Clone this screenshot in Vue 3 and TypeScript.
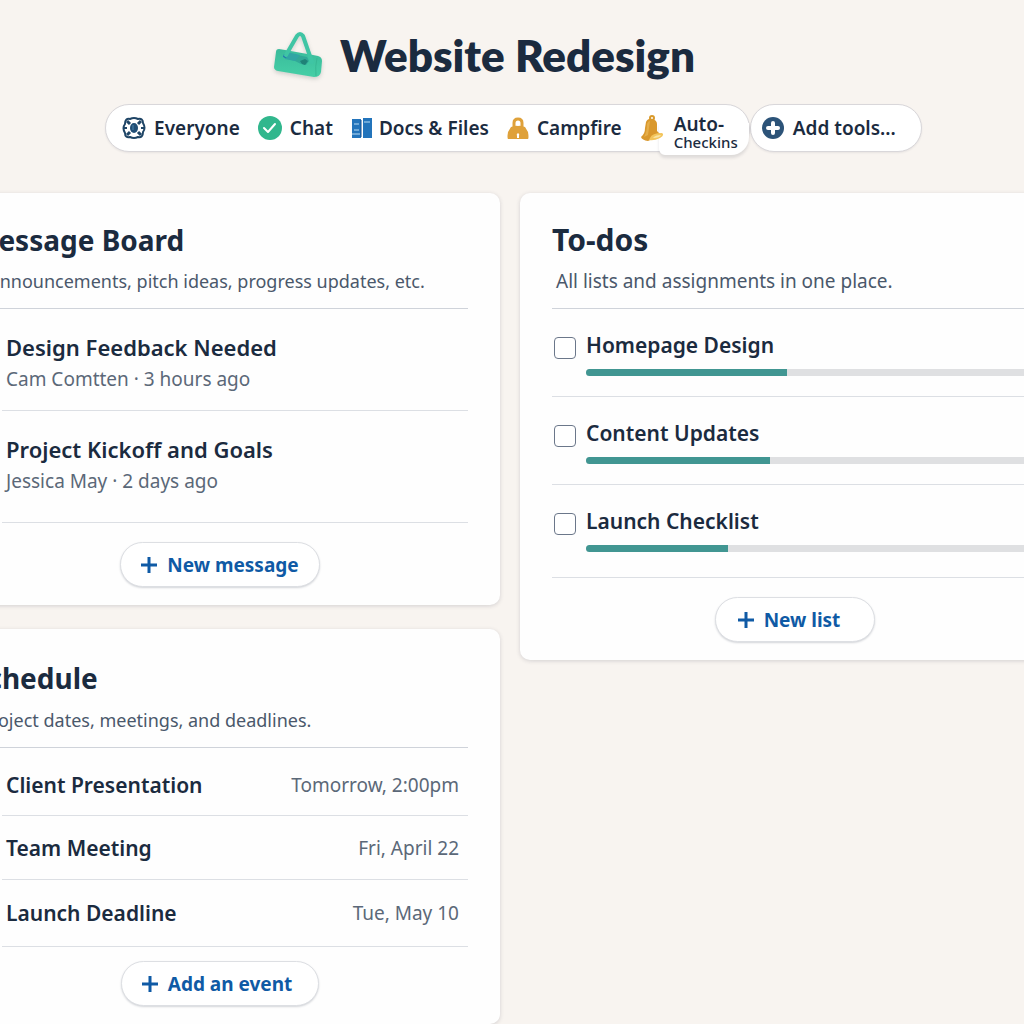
<script setup lang="ts">
interface Message {
  title: string
  author: string
  age: string
}

interface TodoList {
  id: string
  title: string
  progress: number
}

interface ScheduleEvent {
  title: string
  when: string
}

const messages: Message[] = [
  { title: 'Design Feedback Needed', author: 'Cam Comtten', age: '3 hours ago' },
  { title: 'Project Kickoff and Goals', author: 'Jessica May', age: '2 days ago' },
]

const todoLists: TodoList[] = [
  { id: 'homepage', title: 'Homepage Design', progress: 44.5 },
  { id: 'content', title: 'Content Updates', progress: 40.8 },
  { id: 'launch', title: 'Launch Checklist', progress: 31.4 },
]

const events: ScheduleEvent[] = [
  { title: 'Client Presentation', when: 'Tomorrow, 2:00pm' },
  { title: 'Team Meeting', when: 'Fri, April 22' },
  { title: 'Launch Deadline', when: 'Tue, May 10' },
]
</script>

<template>
  <div class="page">
    <header class="header">
      <svg class="logo" viewBox="0 0 50 50" aria-hidden="true">
        <defs>
          <linearGradient id="bag" x1="0" y1="0" x2="0" y2="1">
            <stop offset="0" stop-color="#3abb9b" />
            <stop offset="1" stop-color="#45cfa6" />
          </linearGradient>
        </defs>
        <path d="M3 22 Q3 19 6 19 L12 20 L40 25 L45 26 Q49 27 49 31 L48 42 Q47 47 41 47 L5 41 Q1 40 1 37 Z" fill="url(#bag)" />
        <path d="M11 25 L15 23 L34 27 L36 31 L33 35 L28 34 L22 31 L11 28 Z" fill="#31a897" />
        <path d="M14 22 L27 25 L22 31 L12 29 Z" fill="#31a5a4" />
        <path d="M11 24 L14 24 L13 28 L10 27 Z" fill="#2273b3" />
        <path d="M27 31 L32 29 L35 31 L32 35 L29 34 Z" fill="#1f8277" />
        <path d="M13 25 L24 6 Q27 2 30 6 L39 32" fill="none" stroke="#3fc5a4" stroke-width="4" stroke-linecap="round" stroke-linejoin="round" />
        <path d="M44 28 Q42 36 43 46" fill="none" stroke="#37b894" stroke-width="1" />
      </svg>
      <h1>Website Redesign</h1>
    </header>

    <nav class="toolbar" aria-label="Project tools">
      <div class="tools">
        <a href="#" class="tool">
          <svg class="icon" viewBox="0 0 24 24" aria-hidden="true">
            <path d="M8 3 Q12 1 16 3 Q21 2 21 7 Q24 12 21 16 Q21 22 16 21 Q12 23 8 21 Q3 22 3 17 Q0 12 3 8 Q3 2 8 3 Z" fill="#fff" stroke="#1f4566" stroke-width="2" stroke-linejoin="round" />
            <path d="M5 5 L8 8 M19 5 L16 8 M19 19 L16 16 M5 19 L8 16" stroke="#1f4566" stroke-width="3" />
            <path d="M2 12 H5 M19 12 H22" stroke="#1f4566" stroke-width="2" />
            <ellipse cx="12" cy="12" rx="4" ry="5" fill="#1f4d75" />
            <path d="M11 9 V14" stroke="#4f86ad" stroke-width="1" />
          </svg>
          Everyone
        </a>
        <a href="#" class="tool">
          <svg class="icon" viewBox="0 0 24 24" aria-hidden="true">
            <circle cx="12" cy="12" r="12" fill="#31b78d" />
            <path d="M6 12 L10 16 L17 8" fill="none" stroke="#fff" stroke-width="2" stroke-linecap="round" stroke-linejoin="round" />
          </svg>
          Chat
        </a>
        <a href="#" class="tool docs">
          <svg class="icon" viewBox="0 0 22 20" aria-hidden="true">
            <path d="M1 1 H10 V20 H1 Z" fill="#2374bb" />
            <path d="M12 0 H21 V20 H12 Z" fill="#2374bb" />
            <path d="M10 2 V19" stroke="#174f8c" stroke-width="1" />
            <path d="M3 6 H8 M3 12 H8 M1 16 H9 M13 4 H19" stroke="#b9dcf5" stroke-width="1" />
          </svg>
          Docs &amp; Files
        </a>
        <a href="#" class="tool campfire">
          <svg class="icon" viewBox="0 0 22 22" aria-hidden="true">
            <path d="M7 12 V6 Q7 2 11 2 Q15 2 15 6 V12" fill="none" stroke="#dfa13a" stroke-width="3" />
            <path d="M4 10 Q11 7 18 10 L21 15 Q22 21 21 22 H1 Q0 21 1 15 Z" fill="#dfa13a" />
            <circle cx="11" cy="7" r="2" fill="#fff" />
            <path d="M11 16 Q13 17 12 19 L12 21 H10 L10 19 Q9 17 11 16" fill="#fff" />
          </svg>
          Campfire
        </a>
        <a href="#" class="tool checkins">
          <svg class="icon" viewBox="0 0 24 26" aria-hidden="true">
            <circle cx="12" cy="3" r="2" fill="none" stroke="#d99a2c" stroke-width="2" />
            <path d="M6 7 Q8 3 12 4 Q17 5 17 9 L17 16 L21 20 L8 26 Q2 25 1 22 Q5 19 5 13 Z" fill="#d9982d" />
            <path d="M7 9 Q8 6 10 6 L8 20 L4 22 Q7 17 7 9" fill="#e5ae4a" />
            <path d="M10 23 Q12 18 22 18 Q25 20 20 23 Q14 26 9 25 Z" fill="#f3c55c" />
            <path d="M13 23 Q15 20 21 20 Q20 23 13 23" fill="#fae5a5" />
          </svg>
          <span class="stacked">Auto-<small>Checkins</small></span>
        </a>
      </div>
      <button type="button" class="add-tools">
        <svg class="icon" viewBox="0 0 22 22" aria-hidden="true">
          <circle cx="11" cy="11" r="11" fill="#2c5378" />
          <path d="M11 6 V16 M6 11 H16" stroke="#fff" stroke-width="4" stroke-linecap="round" />
        </svg>
        Add tools…
      </button>
    </nav>

    <main class="board">
      <div class="column">
        <section class="card messages">
          <h2>Message Board</h2>
          <p class="lead">Post announcements, pitch ideas, progress updates, etc.</p>
          <ul class="rows">
            <li v-for="message in messages" :key="message.title">
              <h3>{{ message.title }}</h3>
              <p class="meta">{{ message.author }} · {{ message.age }}</p>
            </li>
          </ul>
          <button type="button" class="action">
            <svg viewBox="0 0 16 16" aria-hidden="true"><path d="M8 0 V16 M0 8 H16" /></svg>
            New message
          </button>
        </section>

        <section class="card schedule">
          <h2>Schedule</h2>
          <p class="lead">Project dates, meetings, and deadlines.</p>
          <ul class="rows">
            <li v-for="event in events" :key="event.title">
              <h3>{{ event.title }}</h3>
              <time>{{ event.when }}</time>
            </li>
          </ul>
          <button type="button" class="action">
            <svg viewBox="0 0 16 16" aria-hidden="true"><path d="M8 0 V16 M0 8 H16" /></svg>
            Add an event
          </button>
        </section>
      </div>

      <div class="column">
        <section class="card todos">
          <h2>To-dos</h2>
          <p class="lead">All lists and assignments in one place.</p>
          <ul class="rows">
            <li v-for="list in todoLists" :key="list.id">
              <input :id="list.id" type="checkbox" />
              <div class="todo">
                <label :for="list.id">{{ list.title }}</label>
                <div class="track">
                  <div class="fill" :style="{ width: list.progress + '%' }"></div>
                </div>
              </div>
            </li>
          </ul>
          <button type="button" class="action">
            <svg viewBox="0 0 16 16" aria-hidden="true"><path d="M8 0 V16 M0 8 H16" /></svg>
            New list
          </button>
        </section>
      </div>
    </main>
  </div>
</template>

<style>
body {
  margin: 0;
  background: #f8f4f0;
}
</style>

<style scoped>
.page {
  box-sizing: border-box;
  min-height: 100vh;
  overflow: hidden;
  background: #f8f4f0;
  color: #1b2b3f;
  font-family: "Noto Sans", "Open Sans", sans-serif;
  font-size: 19px;
}

h1,
h2,
h3,
p,
ul {
  margin: 0;
  padding: 0;
}

ul {
  list-style: none;
}

.header {
  display: flex;
  justify-content: center;
  align-items: center;
  gap: 17px;
  height: 104px;
  padding: 6px 56px 0 0;
  box-sizing: border-box;
}

.header h1 {
  font-family: Lato, "Noto Sans", sans-serif;
  font-size: 44px;
  line-height: 56px;
  font-weight: 800;
}

.logo {
  width: 50px;
  height: 50px;
  filter: drop-shadow(0 2px 2px rgba(40, 60, 60, 0.2));
}

.toolbar {
  display: flex;
  justify-content: center;
  height: 48px;
  padding-left: 3px;
  font-weight: 600;
}

.tools,
.add-tools {
  display: flex;
  align-items: center;
  box-sizing: border-box;
  border: 1px solid #d9d7da;
  border-radius: 24px;
  background: #fff;
  box-shadow: 0 1px 2px rgba(40, 40, 60, 0.08);
  white-space: nowrap;
}

.tools {
  position: relative;
  gap: 18px;
  padding: 0 11px 0 16px;
}

.tool {
  display: flex;
  align-items: center;
  gap: 8px;
  color: inherit;
  text-decoration: none;
}

.icon {
  flex: none;
  width: 24px;
  height: 24px;
}

.docs {
  gap: 6px;
}

.docs .icon {
  width: 22px;
  height: 20px;
}

.campfire .icon {
  width: 22px;
  height: 22px;
}

.checkins {
  gap: 10px;
}

.checkins::before {
  content: "";
  position: absolute;
  right: 0;
  bottom: -4px;
  width: 90px;
  height: 32px;
  border-radius: 0 0 18px 6px;
  background: #fff;
  box-shadow: 0 3px 3px rgba(40, 40, 60, 0.12);
}

.checkins .icon {
  position: relative;
  height: 26px;
}

.stacked {
  position: relative;
  display: flex;
  flex-direction: column;
  padding-top: 8px;
  line-height: 20px;
}

.stacked small {
  font-size: 15px;
  line-height: 16px;
  font-weight: 500;
}

.add-tools {
  gap: 9px;
  padding: 0 25px 0 11px;
  color: inherit;
  font: inherit;
}

.add-tools .icon {
  width: 22px;
  height: 22px;
}

.board {
  display: grid;
  grid-template-columns: 56fr 55fr;
  align-items: start;
  gap: 20px;
  margin: 41px -46px 0 -60px;
}

.column {
  display: flex;
  flex-direction: column;
  gap: 24px;
}

.card {
  display: flex;
  flex-direction: column;
  padding: 27px 32px 18px;
  border-radius: 10px;
  background: #fefefe;
  box-shadow: 0 1px 4px rgba(50, 50, 70, 0.18);
}

h2 {
  font-size: 28px;
  line-height: 40px;
  font-weight: 700;
}

.todos h2 {
  font-size: 30px;
}

.lead {
  padding: 7px 0 13px;
  border-bottom: 1px solid #cfd3da;
  color: #4a586b;
  font-size: 18px;
  line-height: 28px;
  white-space: nowrap;
}

.messages .lead {
  text-indent: -24px;
}

.rows {
  margin-left: 30px;
}

.rows li {
  box-sizing: border-box;
  border-bottom: 1px solid #dcdfe4;
  padding-left: 4px;
}

h3,
label {
  font-size: 21px;
  line-height: 30px;
  font-weight: 600;
}

.meta,
time {
  color: #5b6878;
  line-height: 28px;
}

.messages h3 {
  font-size: 22px;
}

.messages li {
  min-height: 102px;
  padding-top: 23px;
}

.messages li:last-child {
  min-height: 112px;
}

.meta {
  padding-top: 3px;
}

.schedule h2 {
  padding-top: 2px;
}

.schedule .lead {
  padding: 8px 0 13px 8px;
}

.schedule li {
  display: flex;
  justify-content: space-between;
  align-items: center;
  min-height: 64px;
  padding-right: 9px;
}

.schedule li:first-child {
  min-height: 68px;
  padding-top: 6px;
}

.schedule li:last-child {
  min-height: 67px;
}

.todos .rows {
  margin-left: 0;
}

.todos li {
  display: flex;
  gap: 10px;
  min-height: 88px;
  padding: 21px 0 0 2px;
}

.todos li:last-child {
  min-height: 93px;
}

.todos .lead {
  padding-left: 4px;
  font-size: 19px;
}

input {
  appearance: none;
  flex: none;
  box-sizing: border-box;
  width: 22px;
  height: 22px;
  margin: 7px 0 0;
  border: 1px solid #6b778a;
  border-radius: 4px;
  background: #fff;
}

.todo {
  flex: 1;
}

label {
  display: block;
}

.track {
  height: 7px;
  margin-top: 9px;
  overflow: hidden;
  border-radius: 4px;
  background: #dfe0e2;
}

.fill {
  height: 100%;
  background: #419692;
}

.action {
  display: flex;
  align-items: center;
  align-self: center;
  gap: 10px;
  box-sizing: border-box;
  height: 45px;
  margin-top: 19px;
  padding: 0 20px;
  border: 1px solid #dddfe3;
  border-radius: 23px;
  background: #fff;
  box-shadow: 0 1px 2px rgba(40, 50, 70, 0.2);
  color: #0f5aa5;
  font: inherit;
  font-weight: 700;
}

.schedule .action {
  margin-top: 14px;
  padding-right: 26px;
}

.todos .action {
  padding: 0 34px 0 22px;
}

.action svg {
  width: 16px;
  height: 16px;
  fill: none;
  stroke: currentColor;
  stroke-width: 3;
}
</style>
